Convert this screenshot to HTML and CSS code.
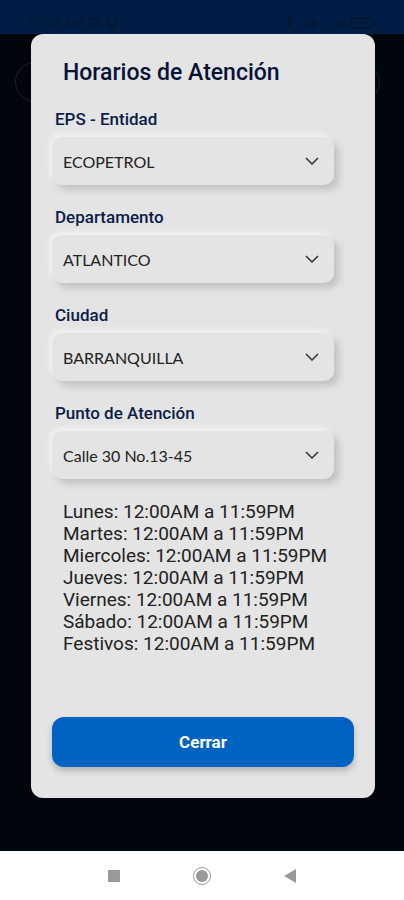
FILE: index.html
```html
<!DOCTYPE html>
<html lang="es">
<head>
<meta charset="utf-8">
<meta name="viewport" content="width=device-width, initial-scale=1">
<title>Horarios de Atención</title>
<link rel="stylesheet" href="styles.css">
</head>
<body>
<header class="status">
  <div class="status-group">
    <span>17:24 AM</span>
    <svg width="14" height="14" viewBox="0 0 14 14" aria-hidden="true"><circle cx="7" cy="7.5" r="4.7"/><path d="M7 5v3h2M1 3.5 3.5 1M13 3.5 10.500 1"/></svg>
    <svg width="14" height="14" viewBox="0 0 14 14" aria-hidden="true"><rect x="2" y="3" width="10" height="8" rx="1.500"/><path d="M4 9h6"/></svg>
  </div>
  <div class="status-group">
    <svg width="10" height="14" viewBox="0 0 10 14" aria-hidden="true"><path d="M2 4l6 6-3 3V1l3 3-6 6"/></svg>
    <svg width="20" height="12" viewBox="0 0 20 12" aria-hidden="true"><path class="bars" d="M3 11V9M7 11V7M11 11V5M15 11V2M18 11V1"/></svg>
    <svg width="24" height="12" viewBox="0 0 24 12" aria-hidden="true"><path class="bars" d="M3 11V9M3 5V2M7 11V9M12 11V7M16 11V5M20 11V2"/></svg>
    <svg width="27" height="12" viewBox="0 0 27 12" aria-hidden="true"><rect x="1" y="1" width="22" height="10" rx="3"/><path d="M25 4v4M8 4v4M12 3l-1 3h3l-1 3M17 4v4"/></svg>
  </div>
</header>
<main class="screen">
  <div class="search-outline"></div>
  <section class="dialog" role="dialog" aria-labelledby="title">
    <h1 id="title">Horarios de Atención</h1>
    <form class="fields">
      <div class="field">
        <label for="eps">EPS - Entidad</label>
        <div class="picker">
          <select id="eps"><option>ECOPETROL</option></select>
          <svg width="14" height="8" viewBox="0 0 14 8" aria-hidden="true"><path d="M1 1l6 6 6-6"/></svg>
        </div>
      </div>
      <div class="field">
        <label for="departamento">Departamento</label>
        <div class="picker">
          <select id="departamento"><option>ATLANTICO</option></select>
          <svg width="14" height="8" viewBox="0 0 14 8" aria-hidden="true"><path d="M1 1l6 6 6-6"/></svg>
        </div>
      </div>
      <div class="field">
        <label for="ciudad">Ciudad</label>
        <div class="picker">
          <select id="ciudad"><option>BARRANQUILLA</option></select>
          <svg width="14" height="8" viewBox="0 0 14 8" aria-hidden="true"><path d="M1 1l6 6 6-6"/></svg>
        </div>
      </div>
      <div class="field">
        <label for="punto">Punto de Atención</label>
        <div class="picker">
          <select id="punto"><option>Calle 30 No.13-45</option></select>
          <svg width="14" height="8" viewBox="0 0 14 8" aria-hidden="true"><path d="M1 1l6 6 6-6"/></svg>
        </div>
      </div>
    </form>
    <ul class="hours">
      <li>Lunes: 12:00AM a 11:59PM</li>
      <li>Martes: 12:00AM a 11:59PM</li>
      <li>Miercoles: 12:00AM a 11:59PM</li>
      <li>Jueves: 12:00AM a 11:59PM</li>
      <li>Viernes: 12:00AM a 11:59PM</li>
      <li>Sábado: 12:00AM a 11:59PM</li>
      <li>Festivos: 12:00AM a 11:59PM</li>
    </ul>
    <button class="close" type="button">Cerrar</button>
  </section>
</main>
<nav class="system-nav" aria-label="Sistema">
  <button type="button" aria-label="Recientes"><svg width="20" height="20" viewBox="0 0 20 20"><rect x="4" y="4" width="12" height="12"/></svg></button>
  <button type="button" aria-label="Inicio"><svg width="20" height="20" viewBox="0 0 20 20"><circle cx="10" cy="10" r="6"/><circle class="ring" cx="10" cy="10" r="8.500"/></svg></button>
  <button type="button" aria-label="Atrás"><svg width="20" height="20" viewBox="0 0 20 20"><path d="M4 10l12-7v14z"/></svg></button>
</nav>
</body>
</html>
```
FILE: styles.css
```css
* {
  box-sizing: border-box;
}

body {
  margin: 0;
  min-height: 100vh;
  display: flex;
  flex-direction: column;
  background: #00050e;
  font-family: Roboto, "Liberation Sans", sans-serif;
}

.status {
  height: 34px;
  padding: 12px 27px 0 28px;
  display: flex;
  justify-content: space-between;
  background: #001e45;
  color: #051630;
  font-size: 13px;
  line-height: 22px;
}

.status-group {
  display: flex;
  align-items: center;
  gap: 4px;
}

.status svg {
  fill: none;
  stroke: #051630;
  stroke-width: 1.5;
}

.status .bars {
  stroke-width: 2;
}

.screen {
  position: relative;
  flex: 1;
  display: flex;
  padding: 0 29px 53px 31px;
}

.search-outline {
  position: absolute;
  top: 28px;
  left: 15px;
  right: 24px;
  height: 40px;
  border: 1px solid #1b2028;
  border-radius: 20px;
}

.dialog {
  position: relative;
  flex: 1;
  display: flex;
  flex-direction: column;
  padding: 25px 21px 31px;
  border-radius: 12px;
  background: #e4e4e4;
}

h1 {
  margin: 0 11px 22px;
  color: #061238;
  font-size: 23px;
  font-weight: 500;
  line-height: 28px;
}

.fields {
  display: flex;
  flex-direction: column;
  gap: 22px;
  margin-right: 20px;
}

.field {
  display: flex;
  flex-direction: column;
  gap: 8px;
}

label {
  margin-left: 3px;
  color: #0b1d49;
  font-size: 17px;
  font-weight: 500;
  line-height: 20px;
}

.picker {
  display: grid;
  align-items: center;
}

.picker > * {
  grid-area: 1 / 1;
}

select {
  appearance: none;
  width: 100%;
  height: 48px;
  padding: 0 36px 0 11px;
  border: 0;
  border-radius: 10px;
  background: #e4e4e4;
  box-shadow: -3px -4px 4px #efefef, 5px 5px 7px #c2c2c2;
  color: #222;
  font-family: Lato, "Liberation Sans", sans-serif;
  font-size: 16px;
}

.picker svg {
  justify-self: end;
  margin-right: 15px;
  fill: none;
  stroke: #333;
  stroke-width: 1.5;
  pointer-events: none;
}

.hours {
  margin: 22px 11px;
  padding: 0;
  list-style: none;
  color: #222;
  font-size: 19px;
  line-height: 22px;
}

.close {
  height: 50px;
  margin-top: auto;
  border: 0;
  border-radius: 12px;
  background: #0062c1;
  box-shadow: 0 4px 6px #b4b4b4;
  color: #fff;
  font-family: inherit;
  font-size: 17px;
  font-weight: 700;
}

.system-nav {
  height: 49px;
  display: flex;
  justify-content: center;
  align-items: center;
  gap: 68px;
  background: #fff;
}

.system-nav button {
  display: flex;
  padding: 0;
  border: 0;
  background: none;
}

.system-nav svg {
  fill: #999;
}

.system-nav .ring {
  fill: none;
  stroke: #999;
}
```
